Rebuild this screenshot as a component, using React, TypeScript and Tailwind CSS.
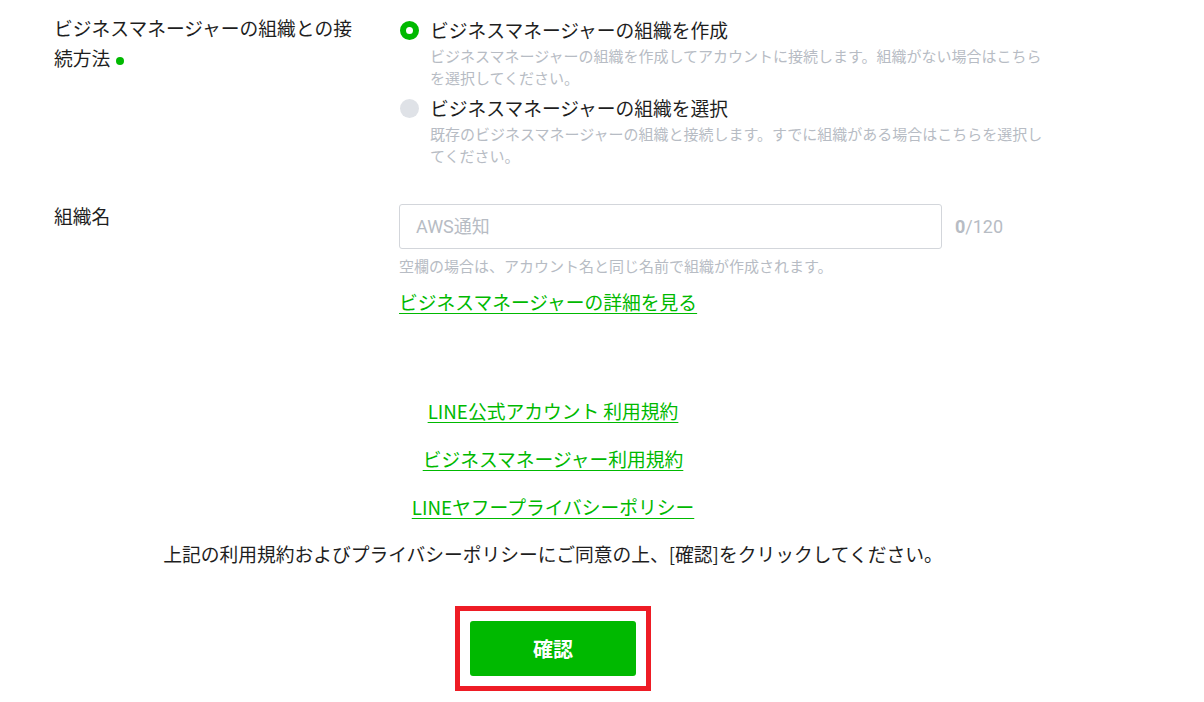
import React from "react";

const jp = "font-['Noto_Sans_CJK_JP',sans-serif]";

export default function App() {
  return (
    <div className={`w-[1106px] bg-white text-[#1e1e1e] ${jp}`}>
      {/* Row 1 */}
      <div className="flex pl-[54px]">
        <div className="w-[345px] shrink-0 pt-[13px]">
          <div className="w-[305px] text-[18.75px] leading-[30px]">
            ビジネスマネージャーの組織との接続方法
            <span className="ml-[6px] inline-block h-[8px] w-[8px] rounded-full bg-[#00b900] align-middle" />
          </div>
        </div>
        <div className="flex flex-col pt-[15px]">
          <div className="flex">
            <div className="mt-[6px] ml-[1px] h-[19px] w-[19px] shrink-0 rounded-full border-[6px] border-[#00b900] bg-white" />
            <div className="ml-[11px]">
              <div className="text-[18.75px] leading-[30px]">ビジネスマネージャーの組織を作成</div>
              <div className="w-[622px] text-[15px] leading-[22px] text-[#b7bcc4]">
                ビジネスマネージャーの組織を作成してアカウントに接続します。組織がない場合はこちらを選択してください。
              </div>
            </div>
          </div>
          <div className="mt-[4px] flex">
            <div className="mt-[6px] ml-[1px] h-[19px] w-[19px] shrink-0 rounded-full bg-[#dfe2e7]" />
            <div className="ml-[11px]">
              <div className="text-[18.75px] leading-[30px]">ビジネスマネージャーの組織を選択</div>
              <div className="w-[622px] text-[15px] leading-[22px] text-[#b7bcc4]">
                既存のビジネスマネージャーの組織と接続します。すでに組織がある場合はこちらを選択してください。
              </div>
            </div>
          </div>
        </div>
      </div>

      {/* Row 2 */}
      <div className="mt-[34px] flex pl-[54px]">
        <div className="w-[345px] shrink-0">
          <div className="text-[18.75px] leading-[30px]">組織名</div>
        </div>
        <div className="flex flex-col pt-[3px]">
          <div className="flex items-center">
            <div className="flex h-[45px] w-[543px] items-center rounded-[3px] border border-[#d3d6db] pl-[16px]">
              <span className="font-['Roboto','Noto_Sans_CJK_JP',sans-serif] text-[18px] text-[#b7bcc4]">AWS通知</span>
            </div>
            <div className="ml-[13px] font-['Roboto',sans-serif] text-[18px] text-[#b7bcc4]">
              <span className="font-bold">0</span>/120
            </div>
          </div>
          <div className="mt-[6px] text-[15px] leading-[22px] text-[#b7bcc4]">
            空欄の場合は、アカウント名と同じ名前で組織が作成されます。
          </div>
          <div className="mt-[10px] text-[18.75px] leading-[30px]">
            <a className="text-[#00b900] underline underline-offset-[3px]">ビジネスマネージャーの詳細を見る</a>
          </div>
        </div>
      </div>

      {/* Terms */}
      <div className="mt-[79px] flex flex-col items-center gap-[18px] text-[18.75px] leading-[30px]">
        <a className="text-[#00b900] underline underline-offset-[3px]">LINE公式アカウント 利用規約</a>
        <a className="text-[#00b900] underline underline-offset-[3px]">ビジネスマネージャー利用規約</a>
        <a className="text-[#00b900] underline underline-offset-[3px]">LINEヤフープライバシーポリシー</a>
      </div>
      <div className="mt-[17px] text-center text-[18.75px] leading-[30px]">
        上記の利用規約およびプライバシーポリシーにご同意の上、[確認]をクリックしてください。
      </div>

      <div className="mt-[37px] flex justify-center">
        <div className="border-[5px] border-[#ee1c25] p-[10px]">
          <button className="flex h-[55px] w-[166px] items-center justify-center rounded-[3px] bg-[#00b900] text-[20px] font-bold text-white">
            確認
          </button>
        </div>
      </div>
      <div className="h-[11px]" />
    </div>
  );
}
